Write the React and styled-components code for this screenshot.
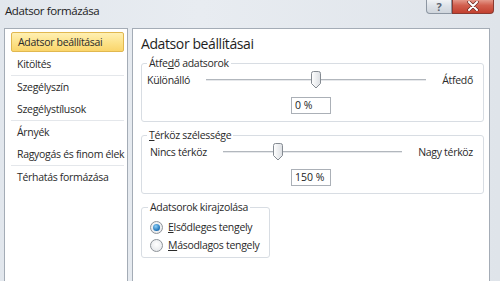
import styled, { createGlobalStyle } from "styled-components"

const GlobalStyle = createGlobalStyle`
  html, body {
    margin: 0;
    padding: 0;
    width: 500px;
    height: 281px;
    overflow: hidden;
  }
  body {
    font-family: "Open Sans", "Noto Sans", sans-serif;
    color: #1f1f1f;
  }
`

const Window = styled.div`
  width: 500px;
  height: 281px;
  display: flex;
  flex-direction: column;
  background: linear-gradient(90deg, #e2e7ed, #e8ecf1 40%, #dfe4ea);
  overflow: hidden;
`

const TitleBar = styled.div`
  height: 28px;
  flex: none;
  display: flex;
  align-items: flex-start;
  padding-left: 5px;
`

const Title = styled.span`
  font-size: 11.5px;
  letter-spacing: -0.4px;
  line-height: 15px;
  padding-top: 3px;
  color: #222;
`

const Caption = styled.div`
  margin-left: auto;
  margin-right: 6px;
  margin-top: -1px;
  display: flex;
`

const CapButton = styled.div`
  height: 14px;
  display: flex;
  align-items: center;
  justify-content: center;
  border: 1px solid ${p => (p.$close ? "#8a3a31" : "#8c96a2")};
  border-top: none;
  width: ${p => (p.$close ? "40px" : "24px")};
  border-radius: ${p => (p.$close ? "0 0 4px 0" : "0 0 0 4px")};
  background: ${p =>
    p.$close
      ? "linear-gradient(#e7a395, #d2604f 45%, #c2402f)"
      : "linear-gradient(#f4f6f8, #dde2e8 50%, #cfd5dc)"};
  color: #5b6470;
  font-size: 11px;
  font-weight: bold;
`

const Body = styled.div`
  flex: 1;
  min-height: 0;
  display: flex;
  gap: 4px;
  padding: 0 10px 0 4px;
`

const Sidebar = styled.div`
  width: 124px;
  flex: none;
  box-sizing: border-box;
  background: #fff;
  border: 1px solid #a4acb6;
  border-bottom: none;
  padding: 2px 3px 0 6px;
`

const NavItem = styled.div`
  height: 22px;
  box-sizing: border-box;
  display: flex;
  align-items: center;
  padding-left: 6px;
  font-size: 10.5px;
  letter-spacing: -0.3px;
  white-space: nowrap;
  color: #2a2a2a;
  ${p =>
    p.$active &&
    `
    height: 20px;
    margin: 1px 0;
    border: 1px solid #e1b84f;
    border-radius: 2px;
    padding-left: 6px;
    background: linear-gradient(#fff0b3, #fde38c 50%, #fad56b);
  `}
`

const NavSep = styled.div`
  height: 1px;
  background: #e4e7eb;
`

const Panel = styled.div`
  flex: 1;
  box-sizing: border-box;
  background: #fff;
  border: 1px solid #a4acb6;
  border-bottom: none;
  padding: 5px 5px 0 8px;
  display: flex;
  flex-direction: column;
`

const Heading = styled.h2`
  margin: 0 0 1px;
  font-size: 14px;
  letter-spacing: -0.4px;
  font-weight: normal;
  line-height: 20px;
  color: #1e1e1e;
`

const Group = styled.fieldset`
  flex: none;
  margin: 0;
  padding: 0 6px 7px 5px;
  border: 1px solid #d8dde3;
  border-radius: 3px;
  min-width: 0;
  display: flex;
  flex-direction: column;
  align-items: center;
  & + & {
    margin-top: 5px;
  }
  ${p => p.$fit && "align-self: flex-start; align-items: flex-start; padding: 3px 10px 3px 6px;"}
`

const Legend = styled.legend`
  padding: 0 2px;
  font-size: 10.5px;
  letter-spacing: -0.3px;
  line-height: 16px;
  color: #2a2a2a;
`

const Key = styled.span`
  text-decoration: underline;
`

const SliderRow = styled.div`
  align-self: stretch;
  height: 18px;
  display: flex;
  align-items: center;
  gap: 16px;
  padding-left: ${p => p.$pad || 0}px;
  padding-right: 4px;
  font-size: 10.5px;
  letter-spacing: -0.3px;
  white-space: nowrap;
  color: #2a2a2a;
`

const Track = styled.div`
  flex: 1;
  height: 2px;
  position: relative;
  border-top: 1px solid #b2b7bd;
  background: #e6e8eb;
  box-sizing: border-box;
`

const Thumb = styled.svg`
  position: absolute;
  top: -9px;
  width: 10px;
  height: 18px;
  margin-left: -5px;
`

const Field = styled.div`
  margin-top: 8px;
  width: 40px;
  height: 17px;
  box-sizing: border-box;
  border: 1px solid #abb0b7;
  font-size: 10.5px;
  line-height: 15px;
  padding-left: 3px;
  color: #222;
  margin-right: 2px;
`

const RadioRow = styled.label`
  height: 18px;
  display: flex;
  align-items: center;
  gap: 5px;
  padding-left: 2px;
  font-size: 10.5px;
  letter-spacing: -0.3px;
  white-space: nowrap;
  color: #2a2a2a;
`

const RadioDot = styled.span`
  width: 13px;
  height: 13px;
  box-sizing: border-box;
  border-radius: 50%;
  border: 1px solid #8e9399;
  background: radial-gradient(circle at 50% 40%, #ffffff, #dfe2e6);
  display: flex;
  align-items: center;
  justify-content: center;
  &::after {
    content: "";
    width: 7px;
    height: 7px;
    border-radius: 50%;
    display: ${p => (p.$checked ? "block" : "none")};
    background: radial-gradient(circle at 40% 35%, #8fd0f7, #1a6fb5 70%, #0f4f8c);
  }
`

function Slider({ left, right, pos, pad }) {
  return (
    <SliderRow $pad={pad}>
      <span>{left}</span>
      <Track>
        <Thumb style={{ left: pos + "%" }} viewBox="0 0 10 18">
          <defs>
            <linearGradient id="tg" x1="0" x2="1">
              <stop offset="0" stopColor="#ffffff" />
              <stop offset="1" stopColor="#dcdfe3" />
            </linearGradient>
          </defs>
          <path
            d="M2.5 0.5 h5 a2 2 0 0 1 2 2 v10 l-4.5 4.5 l-4.5 -4.5 v-10 a2 2 0 0 1 2 -2 z"
            fill="url(#tg)"
            stroke="#858b92"
          />
        </Thumb>
      </Track>
      <span>{right}</span>
    </SliderRow>
  )
}

const nav = [
  ["Adatsor beállításai", "Kitöltés"],
  ["Szegélyszín", "Szegélystílusok"],
  ["Árnyék", "Ragyogás és finom élek"],
  ["Térhatás formázása"],
]

export default function App() {
  return (
    <>
      <GlobalStyle />
      <Window>
        <TitleBar>
          <Title>Adatsor formázása</Title>
          <Caption>
            <CapButton>?</CapButton>
            <CapButton $close>
              <svg width="12" height="10" viewBox="0 0 12 10">
                <path d="M2 1 L10 9 M10 1 L2 9" stroke="#6b2a22" strokeWidth="3.4" strokeLinecap="round" />
                <path d="M2 1 L10 9 M10 1 L2 9" stroke="#ffffff" strokeWidth="2" strokeLinecap="round" />
              </svg>
            </CapButton>
          </Caption>
        </TitleBar>
        <Body>
          <Sidebar>
            {nav.map((group, gi) => (
              <div key={gi}>
                {gi > 0 && <NavSep />}
                {group.map(item => (
                  <NavItem key={item} $active={item === "Adatsor beállításai"}>
                    {item}
                  </NavItem>
                ))}
              </div>
            ))}
          </Sidebar>
          <Panel>
            <Heading>Adatsor beállításai</Heading>
            <Group>
              <Legend>
                Átfe<Key>d</Key>ő adatsorok
              </Legend>
              <Slider left="Különálló" right="Átfedő" pos={50} pad={0} />
              <Field>0 %</Field>
            </Group>
            <Group>
              <Legend>
                <Key>T</Key>érköz szélessége
              </Legend>
              <Slider left="Nincs térköz" right="Nagy térköz" pos={31} pad={3} />
              <Field>150 %</Field>
            </Group>
            <Group $fit>
              <Legend>Adatsorok kirajzolása</Legend>
              <RadioRow>
                <RadioDot $checked />
                <span>
                  <Key>E</Key>lsődleges tengely
                </span>
              </RadioRow>
              <RadioRow>
                <RadioDot />
                <span>
                  <Key>M</Key>ásodlagos tengely
                </span>
              </RadioRow>
            </Group>
          </Panel>
        </Body>
      </Window>
    </>
  )
}
